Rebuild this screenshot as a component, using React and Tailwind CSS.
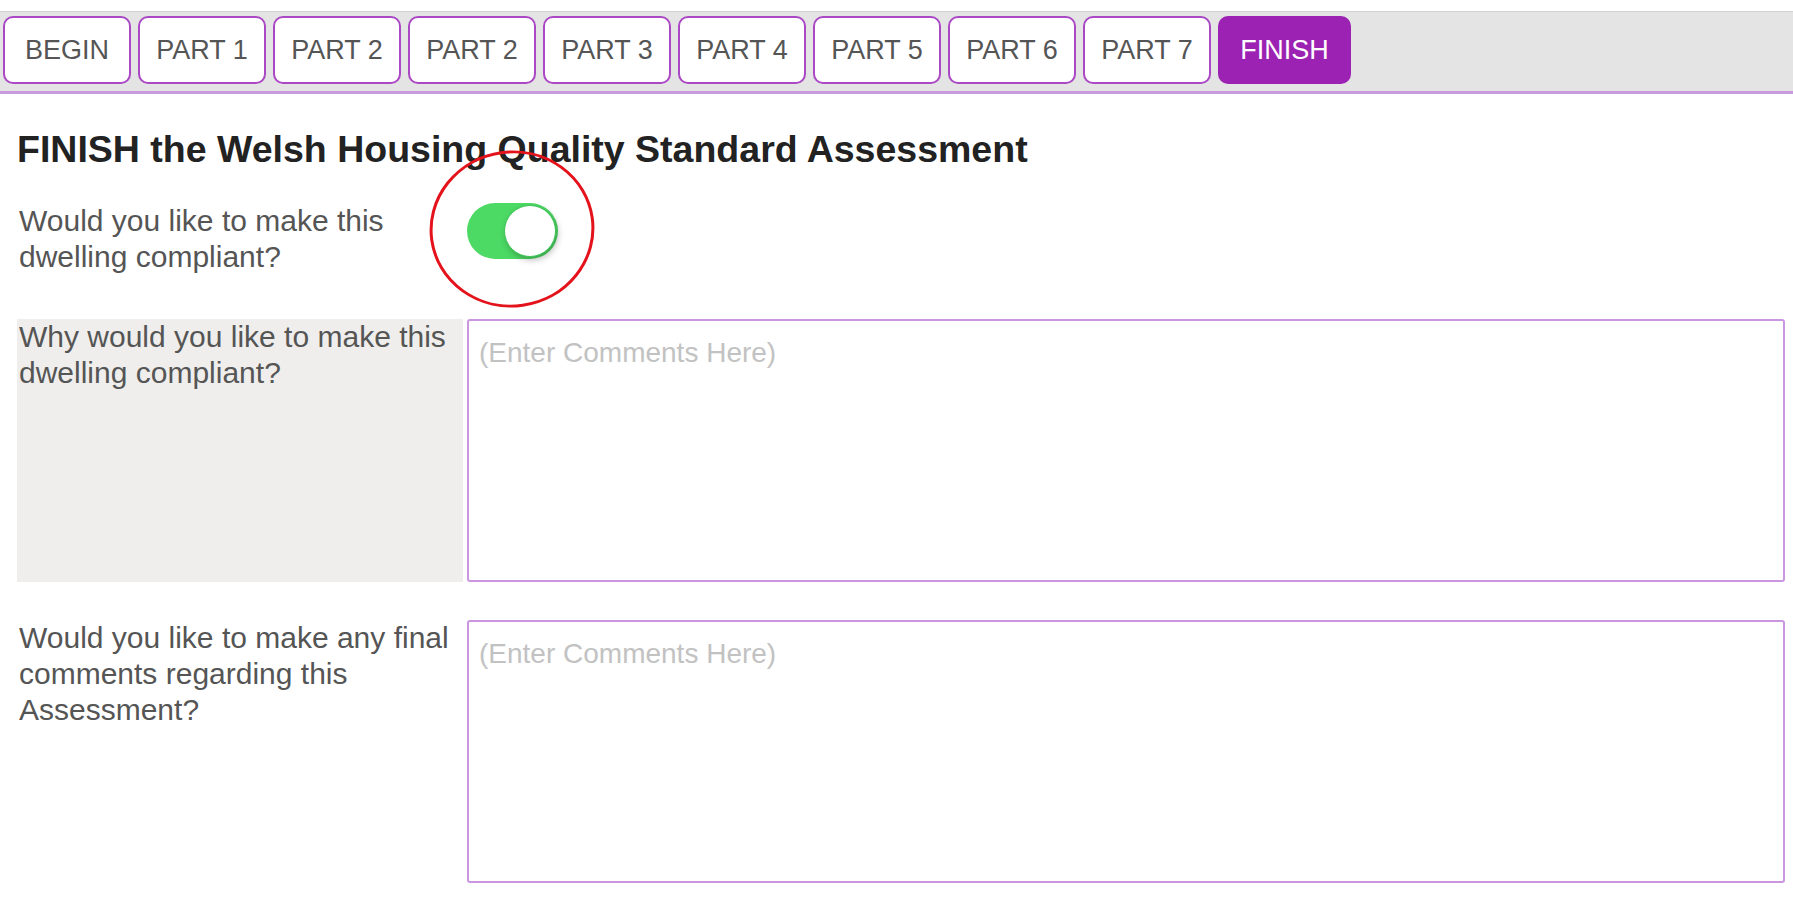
import { useState } from 'react';

const tabs = ['BEGIN', 'PART 1', 'PART 2', 'PART 2', 'PART 3', 'PART 4', 'PART 5', 'PART 6', 'PART 7', 'FINISH'];

function Toggle({ on }) {
    return (
        <div className={`relative w-[91px] h-[56px] rounded-full ${on ? 'bg-[#4cd964]' : 'bg-[#e5e5e5]'}`}>
            <span className="absolute right-[2px] top-[2px] w-[52px] h-[52px] rounded-full bg-white border border-[#3fc457] shadow-[2px_3px_6px_rgba(0,0,0,0.25)]" />
        </div>
    );
}

function CommentRow({ label, shaded }) {
    return (
        <div className="flex gap-[4px]">
            <div className={`w-[446px] pl-[2px] pr-[6px] text-[30px] leading-[36px] text-[#555] ${shaded ? 'bg-[#efeeec]' : ''}`}>
                {label}
            </div>
            <textarea
                placeholder="(Enter Comments Here)"
                className="flex-1 h-[263px] resize-none border-2 border-[#c996df] rounded-[3px] px-[10px] pt-[14px] text-[28px] leading-[36px] text-[#333] placeholder:text-[#c2c2c2] outline-none"
            />
        </div>
    );
}

export default function App() {
    const [active] = useState('FINISH');

    return (
        <div className="relative min-h-[900px] bg-white font-['Liberation_Sans',Arial,sans-serif]">
            {/* Tab bar */}
            <div className="pt-[11px]">
                <div className="flex gap-[7px] px-[3px] pt-[4px] pb-[7px] bg-[#e4e4e4] border-t border-t-[#d2d2d2] border-b-[3px] border-b-[#c99bdc]">
                    {tabs.map((t, i) => (
                        <button
                            key={i}
                            type="button"
                            className={
                                t === active
                                    ? 'w-[133px] h-[68px] rounded-[10px] bg-[#9c22b3] text-white text-[27px]'
                                    : 'w-[128px] h-[68px] rounded-[10px] border-[2.5px] border-[#ab48c6] bg-white text-[#555] text-[27px]'
                            }
                        >
                            {t}
                        </button>
                    ))}
                </div>
            </div>

            {/* Body */}
            <div className="pl-[17px] pr-[8px]">
                <h1 className="mt-[33px] text-[37.5px] leading-[44px] font-semibold text-[#222]">
                    FINISH the Welsh Housing Quality Standard Assessment
                </h1>

                <div className="mt-[32px] flex gap-[4px]">
                    <div className="w-[446px] pl-[2px] pr-[6px] text-[30px] leading-[36px] text-[#555]">
                        Would you like to make this dwelling compliant?
                    </div>
                    <Toggle on />
                </div>

                <div className="mt-[44px]">
                    <CommentRow label="Why would you like to make this dwelling compliant?" shaded />
                </div>
                <div className="mt-[38px] pb-[16px]">
                    <CommentRow label="Would you like to make any final comments regarding this Assessment?" />
                </div>
            </div>

            {/* hand-drawn highlight round the toggle */}
            <svg className="absolute left-[426px] top-[147px] pointer-events-none" width="172" height="164" viewBox="0 0 172 164">
                <ellipse cx="86" cy="82" rx="81" ry="77" fill="none" stroke="#e3121b" strokeWidth="3" transform="rotate(-8 86 82)" />
            </svg>
        </div>
    );
}
